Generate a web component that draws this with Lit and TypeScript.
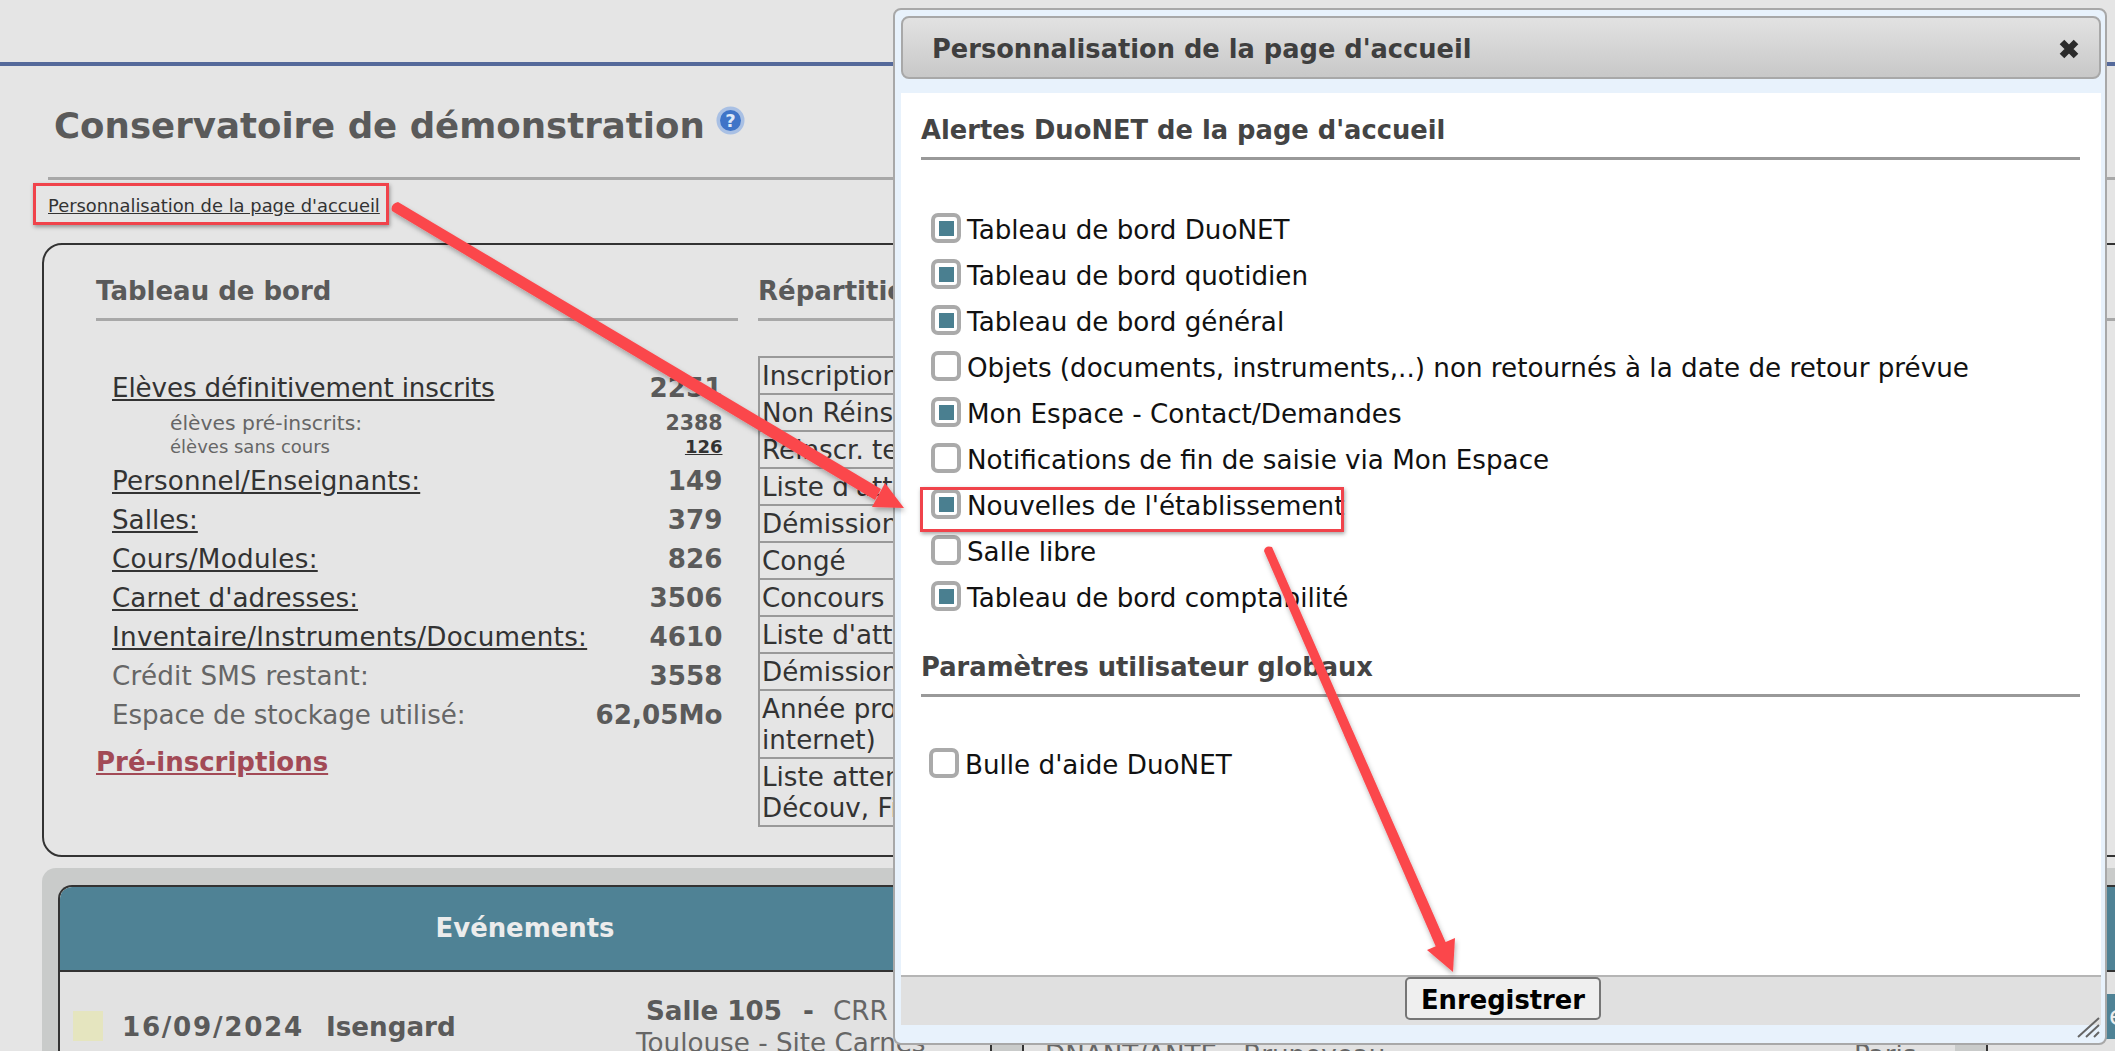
import { LitElement, html, css } from "lit";
import { customElement } from "lit/decorators.js";

const stats: [string, string, string, number][] = [
  ["Personnel/Enseignants:", "149", "l", 0.12],
  ["Salles:", "379", "l", 0],
  ["Cours/Modules:", "826", "l", 0.28],
  ["Carnet d'adresses:", "3506", "l", 0.08],
  ["Inventaire/Instruments/Documents:", "4610", "l", 0.28],
  ["Crédit SMS restant:", "3558", "p", 0.2],
  ["Espace de stockage utilisé:", "62,05Mo", "p", -0.1],
];
const repart: [string[], number][] = [
  [["Inscription"], 37], [["Non Réinscrits"], 37], [["Réinscr. terminées"], 37], [["Liste d'attente"], 37], [["Démission"], 37],
  [["Congé"], 37], [["Concours"], 37], [["Liste d'attente"], 37], [["Démission"], 37],
  [["Année prochaine", "internet)"], 68], [["Liste attente", "Découv, Fi"], 68],
];
const alerts: [string, boolean][] = [
  ["Tableau de bord DuoNET", true],
  ["Tableau de bord quotidien", true],
  ["Tableau de bord général", true],
  ["Objets (documents, instruments,..) non retournés à la date de retour prévue", false],
  ["Mon Espace - Contact/Demandes", true],
  ["Notifications de fin de saisie via Mon Espace", false],
  ["Nouvelles de l'établissement", true],
  ["Salle libre", false],
  ["Tableau de bord comptabilité", true],
];

@customElement("app-root")
export class AppRoot extends LitElement {
  static styles = css`
    :host { display: block; width: 2115px; height: 1051px; overflow: hidden; position: relative; background: #e5e5e5; font-family: "DejaVu Sans", sans-serif; color: #333; }
    a { color: inherit; }
    .page { height: 1051px; width: 2115px; display: flex; flex-direction: column; overflow: hidden; }
    .topbar { height: 62px; flex: none; border-bottom: 4px solid #54699a; }
    .title-row { margin: 37px 0 0 54px; height: 46px; flex: none; display: flex; align-items: flex-start; }
    h1 { margin: 0; font-size: 35.6px; line-height: 46px; font-weight: bold; color: #5a5a5a; white-space: nowrap; }
    .help { margin: 3px 0 0 11px; }
    .rule1 { margin: 28px 0 0 48px; height: 3px; background: #a8a8a8; flex: none; }
    .perso { margin: 13px 0 0 48px; height: 26px; flex: none; font-size: 17.9px; line-height: 26px; color: #333; white-space: nowrap; }
    .board { margin: 24px 0 0 42px; width: 2300px; height: 614px; flex: none; border: 2px solid #333; border-radius: 20px; display: flex; box-sizing: border-box; padding: 28px 0 0 52px; }
    .left { width: 642px; flex: none; }
    .right { margin-left: 20px; flex: 1; overflow: hidden; }
    h2 { margin: 0; font-size: 26px; line-height: 36px; font-weight: bold; color: #5a5a5a; white-space: nowrap; }
    .rule2 { height: 3px; background: #a8a8a8; margin-top: 9px; }
    .stats { margin-top: 47.5px; padding: 0 15.5px 0 16px; }
    .stat { display: flex; justify-content: space-between; height: 39px; align-items: center; font-size: 26.2px; white-space: nowrap; }
    .stat a { color: #333; }
    .stat span.p { color: #666; }
    .stat b { color: #5a5a5a; }
    .first a { letter-spacing: -0.13px; }
    .subs { margin: 4px 0; }
    .sub { display: flex; justify-content: space-between; padding-left: 58px; line-height: 23px; height: 23px; color: #666; }
    .s1 { font-size: 20.3px; }
    .s1 b { color: #5a5a5a; font-size: 20.5px; }
    .s2 { font-size: 18px; }
    .s2 a { color: #333; font-weight: bold; }
    .pre { display: block; margin-top: 9.5px; font-size: 26px; line-height: 36px; font-weight: bold; color: #a24a56; }
    .rep { margin-top: 35px; width: 150px; border: 2px solid #999; border-bottom-width: 0; box-sizing: border-box; }
    .rep div { border-bottom: 2px solid #999; box-sizing: border-box; font-size: 26.2px; line-height: 31px; color: #333; padding: 3px 0 0 2px; white-space: nowrap; overflow: hidden; }
    .events { margin: 11px 0 0 42px; width: 2300px; flex: 1; background: #c9cbca; border-radius: 14px 14px 0 0; padding: 17px 0 0 16px; box-sizing: border-box; display: flex; gap: 30px; align-items: flex-start; }
    .evcard { width: 934px; height: 220px; box-sizing: border-box; border: 2px solid #333; border-bottom: 0; border-radius: 14px 0 0 0; background: #e2e2e2; flex: none; overflow: hidden; }
    .evhead { height: 85px; box-sizing: border-box; padding-bottom: 2px; background: #4f8295; border-bottom: 2px solid #333; border-radius: 12px 0 0 0; color: #ececec; font-size: 25.9px; font-weight: bold; display: flex; align-items: center; justify-content: center; }
    .evrow { display: flex; padding: 39px 0 0 13px; white-space: nowrap; }
    .swatch { width: 30px; height: 30px; background: #e5e5bf; flex: none; }
    .evdate { margin: -1px 0 0 19px; width: 334px; flex: none; font-size: 26.2px; line-height: 34px; font-weight: bold; color: #5a5a5a; display: flex; gap: 22px; }
    .evdate i { font-style: normal; letter-spacing: 1.7px; }
    .evplace { margin: -16px 0 0 180px; font-size: 26.2px; line-height: 32px; color: #666; }
    .evplace b { color: #5a5a5a; }
    .evplace span { display: block; padding-left: 10px; }
    .dash { margin: 0 19px 0 21px; }
    .rcard { width: 1300px; flex: none; height: 220px; box-sizing: border-box; border: 2px solid #333; border-bottom: 0; background: #e2e2e2; overflow: hidden; }
    .rhead { height: 85px; box-sizing: border-box; background: #4f8295; border-bottom: 2px solid #333; }
    .rgap { height: 22px; }
    .rhead2 { height: 45px; background: #4f8295; color: #ececec; font-size: 26px; line-height: 45px; padding-left: 1085px; }
    .rrow { display: flex; white-space: nowrap; font-size: 26.2px; line-height: 33px; color: #666; padding: 0 0 0 21px; height: 60px; box-sizing: border-box; }
    .rrow span:first-child { width: 809px; flex: none; }
    .rrow span:nth-child(2) { width: 101px; flex: none; }
    .rrow i { width: 31px; height: 60px; background: #c9cbca; border-right: 2px solid #333; flex: none; }

    .dialog { position: absolute; left: 893px; top: 8px; width: 1214px; height: 1037px; box-sizing: border-box; border: 2px solid #a8a8a8; border-radius: 8px; background: #e8f2fc; padding: 6px 4px 0 6px; display: flex; flex-direction: column; }
    .dhead { height: 63px; flex: none; box-sizing: border-box; border: 2px solid #a8a8a8; border-radius: 8px; background: linear-gradient(#e2e2e2, #c8c8c8); display: flex; align-items: center; justify-content: space-between; padding: 2px 20px 0 29px; font-size: 25.7px; font-weight: bold; color: #3f3f3f; }
    .close { width: 20px; height: 20px; display: block; flex: none; }
    .dbody { margin-top: 14px; height: 882px; flex: none; background: #fff; padding: 20px 0 0 20px; box-sizing: border-box; }
    .dbody h3 { margin: 0; font-size: 25.75px; line-height: 34px; font-weight: bold; color: #444; }
    .drule { height: 3px; margin: 10px 21px 0 0; background: #999; }
    .opts { margin-top: 45px; padding-left: 10px; }
    .opt { display: flex; align-items: center; height: 46px; font-size: 26.2px; color: #111; white-space: nowrap; gap: 6px; }
    .opt span:last-child { padding-top: 4px; }
    .box { width: 30px; height: 30px; box-sizing: border-box; border: 4px solid #aaa; border-radius: 7px; background: #fff; display: flex; align-items: center; justify-content: center; flex: none; }
    .box i { display: block; width: 15px; height: 15px; background: #4a7f90; }
    .dbody h3.sec2 { margin-top: 31px; }
    .opts2 { margin-top: 43px; padding-left: 8px; }
    .dfoot { height: 50px; flex: none; box-sizing: border-box; border-top: 2px solid #b5b5b5; background: #e0e0e0; display: flex; justify-content: center; }
    .btn { height: 43px; width: 196px; box-sizing: border-box; border: 2px solid #767676; border-radius: 5px; background: #efefef; color: #000; font: bold 25.8px "DejaVu Sans", sans-serif; padding: 2px 0 0; margin-left: 4px; }
    .grip { position: absolute; right: 5px; bottom: 5px; width: 23px; height: 21px; }
    .over { position: absolute; left: 0; top: 0; pointer-events: none; }
    .mark { position: absolute; box-sizing: border-box; border: 3px solid #f0434b; box-shadow: 1px 2px 4px rgba(0,0,0,.35); }
    .m1 { left: 33px; top: 183px; width: 356px; height: 42px; }
    .m2 { left: 920px; top: 487px; width: 424px; height: 45px; }
  `;

  render() {
    return html`
      <div class="page">
        <div class="topbar"></div>
        <div class="title-row">
          <h1>Conservatoire de démonstration</h1>
          <svg class="help" width="29" height="29" viewBox="0 0 29 29">
            <circle cx="14.5" cy="14.5" r="14" fill="#a9c0e4" />
            <circle cx="14.5" cy="14.5" r="10.5" fill="#3f74c8" />
            <text x="14.5" y="21" text-anchor="middle" font-size="18" font-weight="bold" font-family="DejaVu Sans" fill="#dfe9f8">?</text>
          </svg>
        </div>
        <div class="rule1"></div>
        <div class="perso"><a href="#">Personnalisation de la page d'accueil</a></div>
        <div class="board">
          <div class="left">
            <h2>Tableau de bord</h2>
            <div class="rule2"></div>
            <div class="stats">
              <div class="stat first"><a href="#">Elèves définitivement inscrits</a><b>2251</b></div>
              <div class="subs">
                <div class="sub s1"><span>élèves pré-inscrits:</span><b>2388</b></div>
                <div class="sub s2"><span>élèves sans cours</span><a href="#">126</a></div>
              </div>
              ${stats.map(([l, v, k, ls]) => html`<div class="stat">${k === "l" ? html`<a href="#" style="letter-spacing:${ls}px">${l}</a>` : html`<span class="p" style="letter-spacing:${ls}px">${l}</span>`}<b>${v}</b></div>`)}
            </div>
            <a class="pre" href="#">Pré-inscriptions</a>
          </div>
          <div class="right">
            <h2>Répartition</h2>
            <div class="rule2"></div>
            <div class="rep">
              ${repart.map(([t, h]) => html`<div style="height:${h}px">${t[0]}${t[1] ? html`<br />${t[1]}` : ""}</div>`)}
            </div>
          </div>
        </div>
        <div class="events">
          <div class="evcard">
            <div class="evhead">Evénements</div>
            <div class="evrow">
              <div class="swatch"></div>
              <div class="evdate"><i>16/09/2024</i><span>Isengard</span></div>
              <div class="evplace"><span><b>Salle 105</b><b class="dash">-</b>CRR</span>Toulouse - Site Carnes</div>
            </div>
          </div>
          <div class="rcard">
            <div class="rhead"></div>
            <div class="rgap"></div>
            <div class="rhead2">e</div>
            <div class="rrow"><span>DNANT/ANTE - Brunoyeau</span><span>Paris</span><i></i></div>
          </div>
        </div>
      </div>

      <div class="dialog">
        <div class="dhead">
          <span>Personnalisation de la page d'accueil</span>
          <svg class="close" viewBox="0 0 20 20"><path d="M3 3 L17 17 M17 3 L3 17" stroke="#2b2b2b" stroke-width="6.5" /></svg>
        </div>
        <div class="dbody">
          <h3>Alertes DuoNET de la page d'accueil</h3>
          <div class="drule"></div>
          <div class="opts">
            ${alerts.map(([t, c]) => html`<div class="opt"><span class="box">${c ? html`<i></i>` : ""}</span><span>${t}</span></div>`)}
          </div>
          <h3 class="sec2">Paramètres utilisateur globaux</h3>
          <div class="drule"></div>
          <div class="opts opts2">
            <div class="opt"><span class="box"></span><span>Bulle d'aide DuoNET</span></div>
          </div>
        </div>
        <div class="dfoot"><button class="btn">Enregistrer</button></div>
        <svg class="grip" viewBox="0 0 23 21"><path d="M1 20 L22 1 M9 20 L22 8 M17 20 L22 15" stroke="#666" stroke-width="2" /></svg>
      </div>

      <div class="mark m1"></div>
      <div class="mark m2"></div>
      <svg class="over" width="2115" height="1051" viewBox="0 0 2115 1051">
        <defs><filter id="s" x="-5%" y="-5%" width="110%" height="110%"><feDropShadow dx="1" dy="3" stdDeviation="2.5" flood-color="#000" flood-opacity=".3" /></filter></defs>
        <g filter="url(#s)" fill="#fb474c">
          <path d="M398 202 L881 489 L875 500 L392 211 Q390 204 398 202 Z" />
          <path d="M885 483 L904 508 L872 507 Z" />
          <path d="M1272 547 L1446 943 L1436 947 L1264 551 Q1265 545 1272 547 Z" />
          <path d="M1455 938 L1453 972 L1427 950 Z" />
        </g>
      </svg>
    `;
  }
}
